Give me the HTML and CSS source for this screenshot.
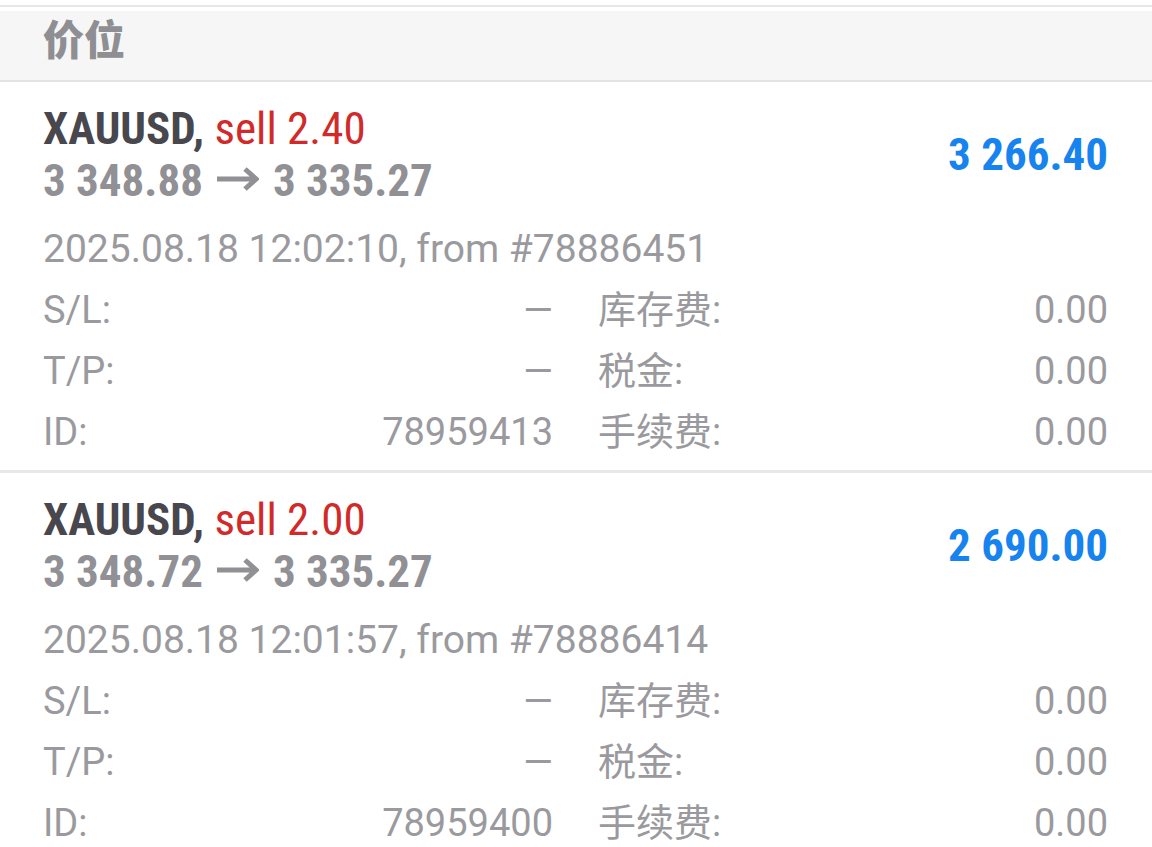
FILE: index.html
```html
<!DOCTYPE html>
<html>
<head>
  <meta charset="utf-8">
  <title>History</title>
  <link rel="stylesheet" href="styles.css">
</head>
<body>
  <div class="cut-rule"></div>
  <div class="group-head">价位</div>

  <div class="deal">
    <div class="deal-top">
      <div class="deal-title">
        <div class="line"><span class="symbol">XAUUSD,</span> <span class="side">sell 2.40</span></div>
        <div class="line prices">3 348.88<svg class="arrow" viewBox="0 0 42 24"><path d="M0 12H38M28 2L39 12L28 22"/></svg>3 335.27</div>
      </div>
      <div class="profit">3 266.40</div>
    </div>
    <div class="meta">2025.08.18 12:02:10, from #78886451</div>
    <div class="details">
      <div class="pair"><span>S/L:</span><span>&mdash;</span></div>
      <div class="pair"><span>库存费:</span><span>0.00</span></div>
      <div class="pair"><span>T/P:</span><span>&mdash;</span></div>
      <div class="pair"><span>税金:</span><span>0.00</span></div>
      <div class="pair"><span>ID:</span><span>78959413</span></div>
      <div class="pair"><span>手续费:</span><span>0.00</span></div>
    </div>
  </div>

  <div class="deal">
    <div class="deal-top">
      <div class="deal-title">
        <div class="line"><span class="symbol">XAUUSD,</span> <span class="side">sell 2.00</span></div>
        <div class="line prices">3 348.72<svg class="arrow" viewBox="0 0 42 24"><path d="M0 12H38M28 2L39 12L28 22"/></svg>3 335.27</div>
      </div>
      <div class="profit">2 690.00</div>
    </div>
    <div class="meta">2025.08.18 12:01:57, from #78886414</div>
    <div class="details">
      <div class="pair"><span>S/L:</span><span>&mdash;</span></div>
      <div class="pair"><span>库存费:</span><span>0.00</span></div>
      <div class="pair"><span>T/P:</span><span>&mdash;</span></div>
      <div class="pair"><span>税金:</span><span>0.00</span></div>
      <div class="pair"><span>ID:</span><span>78959400</span></div>
      <div class="pair"><span>手续费:</span><span>0.00</span></div>
    </div>
  </div>
</body>
</html>
```

FILE: styles.css
```css
body {
  margin: 0;
  padding-top: 5px;
  background: #ffffff;
  font-family: Roboto, "Noto Sans CJK SC", sans-serif;
  color: #9a9a9e;
  overflow: hidden;
}

.cut-rule {
  height: 2px;
  background: #e6e6e6;
  margin-bottom: 4px;
}

.group-head {
  height: 69px;
  line-height: 52px;
  padding-left: 43px;
  background: #f6f6f6;
  border-bottom: 2px solid #e3e3e3;
  font-family: "Noto Sans CJK SC", sans-serif;
  font-weight: 900;
  font-size: 41px;
  color: #8e8e93;
}

.deal {
  padding: 21px 44px 7px 43px;
  border-bottom: 3px solid #e8e8e8;
}

.deal-top {
  display: flex;
  align-items: center;
  justify-content: space-between;
}

.deal-title .line,
.profit {
  font-family: "Roboto Condensed", "Liberation Sans Narrow", "DejaVu Sans Condensed", sans-serif;
  font-weight: bold;
  font-size: 45px;
  line-height: 52px;
}

.symbol {
  color: #48474d;
}

.side {
  font-weight: normal;
  color: #d12a2a;
}

.prices {
  color: #909095;
}

.arrow {
  width: 42px;
  height: 24px;
  margin: 0 14px;
  vertical-align: 5px;
}

.arrow path {
  fill: none;
  stroke: #909095;
  stroke-width: 5;
}

.profit {
  padding-left: 6px;
  color: #1783ef;
}

.meta {
  margin-top: 12px;
  font-size: 39px;
  line-height: 61px;
}

.details {
  display: grid;
  grid-template-columns: 1fr 1fr;
  column-gap: 45px;
  font-size: 38px;
  line-height: 61px;
}

.pair {
  display: flex;
  justify-content: space-between;
}
```
